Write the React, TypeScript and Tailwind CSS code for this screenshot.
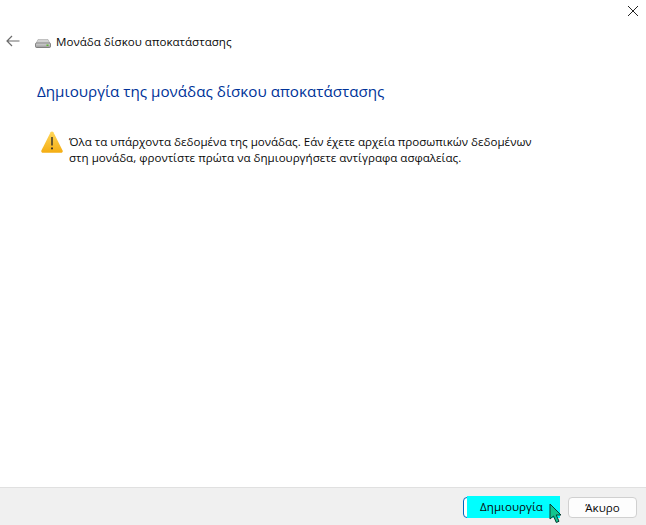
import React from "react";

function Drive() {
  return (
    <svg width="16" height="16" viewBox="0 0 16 16" className="shrink-0">
      <defs>
        <linearGradient id="d" x1="0" y1="0" x2="0" y2="1">
          <stop offset="0" stopColor="#d8d8d8" />
          <stop offset="1" stopColor="#9a9a9a" />
        </linearGradient>
      </defs>
      <path d="M3 5.500h10l2 4H1z" fill="#d2d2d2" stroke="#9a9a9a" strokeWidth="0.5" />
      <rect x="0.500" y="9" width="15" height="4.500" rx="1" fill="url(#d)" stroke="#5f5f5f" strokeWidth="0.7" />
      <rect x="11.500" y="10.500" width="2" height="1.500" fill="#5cb531" />
    </svg>
  );
}

function Warn() {
  return (
    <svg width="22" height="22" viewBox="0 0 22 22" className="shrink-0">
      <defs>
        <linearGradient id="w" x1="0" y1="0" x2="0" y2="1">
          <stop offset="0" stopColor="#ffd75a" />
          <stop offset="1" stopColor="#f4ad12" />
        </linearGradient>
      </defs>
      <path d="M9.600 1.200c.6-1.100 2.200-1.100 2.800 0l9.200 18.300c.5 1-.2 2.200-1.400 2.200H1.800C.600 21.700-.100 20.500.400 19.500z" fill="url(#w)" />
      <rect x="10.300" y="6" width="1.400" height="8.500" fill="#2b2b2b" />
      <rect x="10.100" y="16.500" width="1.800" height="1.800" fill="#2b2b2b" />
    </svg>
  );
}

function Cursor() {
  return (
    <svg width="14" height="21" viewBox="0 0 14 21" className="absolute left-[549px] top-[503px]">
      <path d="M1 1v15l3.500-3 2.800 6.500 2.700-1.200-2.800-6.300H12z" fill="#12c58e" stroke="#0a3b30" strokeWidth="1" strokeLinejoin="round" />
    </svg>
  );
}

export default function App() {
  return (
    <div className="relative flex h-[525px] w-[646px] flex-col overflow-hidden bg-white font-['Open_Sans','Noto_Sans',sans-serif] text-[11.58px] text-[#0a0a0a]">
      <div className="flex h-[487px] flex-col">
        <div className="flex h-[20px] justify-end pr-[7px] pt-[5px]">
          <svg width="12" height="12" viewBox="0 0 12 12" stroke="#222" strokeWidth="1" fill="none">
            <path d="M1 1l10 10M11 1L1 11" />
          </svg>
        </div>
        <div className="flex h-[44px] items-center pl-[6px]">
          <svg width="14" height="12" viewBox="0 0 14 12" stroke="#6b6b6b" strokeWidth="1.200" fill="none" className="mb-[2px] shrink-0">
            <path d="M13.500 6H1M6 1L1 6l5 5" />
          </svg>
          <span className="ml-[15px]"><Drive /></span>
          <span className="ml-[5px]">Μονάδα δίσκου αποκατάστασης</span>
        </div>
        <div className="ml-[37px] mt-[17px] text-[15.2px] leading-[20px] text-[#003399]">
          Δημιουργία της μονάδας δίσκου αποκατάστασης
        </div>
        <div className="ml-[41px] mt-[30px] flex gap-[6px]">
          <Warn />
          <p className="mt-[3px] leading-[16px]">
            Όλα τα υπάρχοντα δεδομένα της μονάδας. Εάν έχετε αρχεία προσωπικών δεδομένων
            <br />
            στη μονάδα, φροντίστε πρώτα να δημιουργήσετε αντίγραφα ασφαλείας.
          </p>
        </div>
      </div>
      <div className="flex h-[38px] items-start justify-end gap-[9px] border-t border-[#e0e0e0] bg-[#f0f0f0] pr-[9px] pt-[9px]">
        <div className="relative h-[21px] w-[96px] rounded-[4px] border border-[#0067c0] bg-white">
          <div className="absolute -top-[2px] left-[3px] flex h-[22px] w-[93px] items-center justify-center bg-[#00ffff] pr-[4px]">
            Δημιουργία
          </div>
        </div>
        <div className="flex h-[21px] w-[69px] items-center justify-center rounded-[4px] border border-[#d0d0d0] bg-[#fdfdfd]">
          Άκυρο
        </div>
      </div>
      <Cursor />
    </div>
  );
}
